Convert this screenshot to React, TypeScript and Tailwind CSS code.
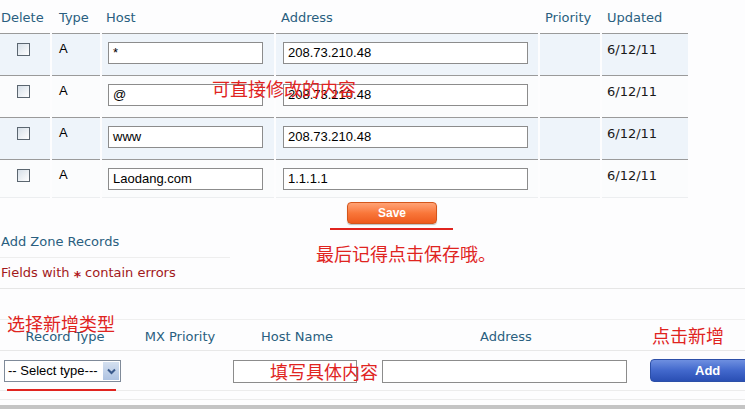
import React from "react";

const rows = [
  { host: "*", addr: "208.73.210.48", blue: true },
  { host: "@", addr: "208.73.210.48", blue: false },
  { host: "www", addr: "208.73.210.48", blue: true },
  { host: "Laodang.com", addr: "1.1.1.1", blue: false },
];

const verdana = { fontFamily: '"DejaVu Sans", Verdana, sans-serif' };
const arial = { fontFamily: '"Liberation Sans", Arial, sans-serif' };
const cjk = { fontFamily: '"Noto Sans CJK SC", "Noto Sans", sans-serif' };

function Field({ value, w }: { value: string; w: string }) {
  return (
    <div
      className={`${w} h-[22px] border border-[#8c8c8c] bg-white px-[4px] text-[13px] leading-[20px] text-black`}
      style={arial}
    >
      {value}
    </div>
  );
}

export default function App() {
  const headCell = "h-[34px] pt-[2px] border-b border-[#9a9a9a] flex items-center text-[13px] text-[#2a5f80]";
  const subHead = "h-[31px] pt-[4px] flex items-center justify-center text-[13px] text-[#2a5f80] border-b border-[#e8e8e8]";
  return (
    <div className="relative w-[745px] h-[409px] overflow-hidden bg-[#fdfdfe]" style={verdana}>
      {/* top table */}
      <div className="grid grid-cols-[50px_48px_172px_262px_60px_86px] gap-x-[2px] w-[688px]">
        <div className={`${headCell} pl-[1px]`}>Delete</div>
        <div className={`${headCell} pl-[7px]`}>Type</div>
        <div className={`${headCell} pl-[4px]`}>Host</div>
        <div className={`${headCell} pl-[5px]`}>Address</div>
        <div className={`${headCell} pl-[5px]`}>Priority</div>
        <div className={`${headCell} pl-[5px]`}>Updated</div>
        {rows.map((r, i) => {
          const last = i === rows.length - 1;
          const cell = `${last ? "h-[38px] border-b border-[#eceef0]" : "h-[42px] border-b border-[#9a9a9a]"} ${
            r.blue ? "bg-[#eef4fa]" : "bg-[#fbfcfd]"
          }`;
          return (
            <React.Fragment key={i}>
              <div className={`${cell} pl-[17px] pt-[9px]`}>
                <div className="w-[13px] h-[13px] border border-[#5b6670] bg-gradient-to-br from-[#d6dfe8] to-white" />
              </div>
              <div className={`${cell} pl-[7px] pt-[6px] text-[13px] leading-[18px] text-black`} style={arial}>
                A
              </div>
              <div className={`${cell} pl-[6px] pt-[8px]`}>
                <Field value={r.host} w="w-[155px]" />
              </div>
              <div className={`${cell} pl-[7px] pt-[8px]`}>
                <Field value={r.addr} w="w-[245px]" />
              </div>
              <div className={cell} />
              <div className={`${cell} pl-[5px] pt-[7px] text-[13px] leading-[18px] text-[#1a1a1a]`}>6/12/11</div>
            </React.Fragment>
          );
        })}
      </div>

      {/* save row */}
      <div className="h-[32px] pl-[347px] pt-[4px]">
        <div
          className="w-[90px] h-[22px] rounded-[4px] border border-[#d4561c] bg-gradient-to-b from-[#ffa274] via-[#f9773a] to-[#ee5a1c] text-white font-bold text-[12px] leading-[20px] text-center shadow-[0_1px_1px_rgba(0,0,0,0.25)]"
          style={arial}
        >
          Save
        </div>
      </div>

      <div className="h-[28px] w-[230px] border-b border-[#eeeeee] pl-[1px] pt-[1px] text-[13px] leading-[22px] text-[#2a5f80]">
        Add Zone Records
      </div>
      <div className="h-[31px] border-b border-[#e6e6e6] pl-[1px] pt-[4px] text-[13px] leading-[20px] text-[#a2191b]">
        Fields with <span className="relative top-[4px] text-[14px] font-bold text-[#b0181a]">*</span> contain errors
      </div>

      {/* bottom table */}
      <div className="h-[31px] border-b border-[#efefef]" />
      <div className="grid grid-cols-[130px_100px_134px_284px_97px] w-[745px]">
        <div className={subHead}>Record Type</div>
        <div className={subHead}>MX Priority</div>
        <div className={subHead}>Host Name</div>
        <div className={subHead}>Address</div>
        <div className="h-[31px] border-b border-[#e8e8e8]" />

        <div className="h-[40px] pl-[4px] pt-[9px] border-b border-[#ececec]">
          <div className="w-[117px] h-[22px] border border-[#7f8a99] bg-white flex items-center justify-between pl-[3px] pr-[1px]" style={arial}>
            <span className="text-[13px] text-black leading-[18px]">-- Select type---</span>
            <span className="w-[16px] h-[18px] bg-gradient-to-b from-[#d4e0f0] to-[#aec3e2] flex items-center justify-center">
              <svg width="9" height="7" viewBox="0 0 9 7">
                <path d="M1 1.5 L4.5 5 L8 1.5" fill="none" stroke="#3a5a8c" strokeWidth="2" />
              </svg>
            </span>
          </div>
        </div>
        <div className="h-[40px] border-b border-[#ececec]" />
        <div className="h-[40px] pl-[3px] pt-[9px] border-b border-[#ececec]">
          <div className="w-[124px] h-[23px] border border-[#8c8c8c] bg-white" />
        </div>
        <div className="h-[40px] pl-[18px] pt-[9px] border-b border-[#ececec]">
          <div className="w-[245px] h-[23px] border border-[#8c8c8c] bg-white" />
        </div>
        <div className="h-[40px] pl-[2px] pt-[8px] border-b border-[#ececec]">
          <div
            className="w-[100px] h-[23px] rounded-l-[4px] border border-[#2c4fa8] bg-gradient-to-b from-[#6e8fe0] via-[#4268cc] to-[#2a4fb4] text-white font-bold text-[13px] leading-[21px] pl-[44px]"
            style={arial}
          >
            Add
          </div>
        </div>
      </div>
      <div className="h-[9px] border-b border-[#ececec]" />
      <div className="h-[5px]" />
      <div className="h-[4px] bg-[#c4c4c4]" />

      {/* annotations */}
      <div className="absolute left-[212px] top-[76px] text-[18px] leading-[24px] text-[#e0241f]" style={cjk}>可直接修改的内容</div>
      <div className="absolute left-[330px] top-[228px] w-[123px] h-[2px] bg-[#e0241f]" />
      <div className="absolute left-[316px] top-[241px] text-[18px] leading-[24px] text-[#e0241f]" style={cjk}>最后记得点击保存哦。</div>
      <div className="absolute left-[7px] top-[311px] text-[18px] leading-[24px] text-[#e0241f]" style={cjk}>选择新增类型</div>
      <div className="absolute left-[652px] top-[323px] text-[18px] leading-[24px] text-[#e0241f]" style={cjk}>点击新增</div>
      <div className="absolute left-[270px] top-[359px] text-[18px] leading-[24px] text-[#e0241f]" style={cjk}>填写具体内容</div>
      <div className="absolute left-[7px] top-[389px] w-[109px] h-[2px] bg-[#e0241f]" />
    </div>
  );
}
